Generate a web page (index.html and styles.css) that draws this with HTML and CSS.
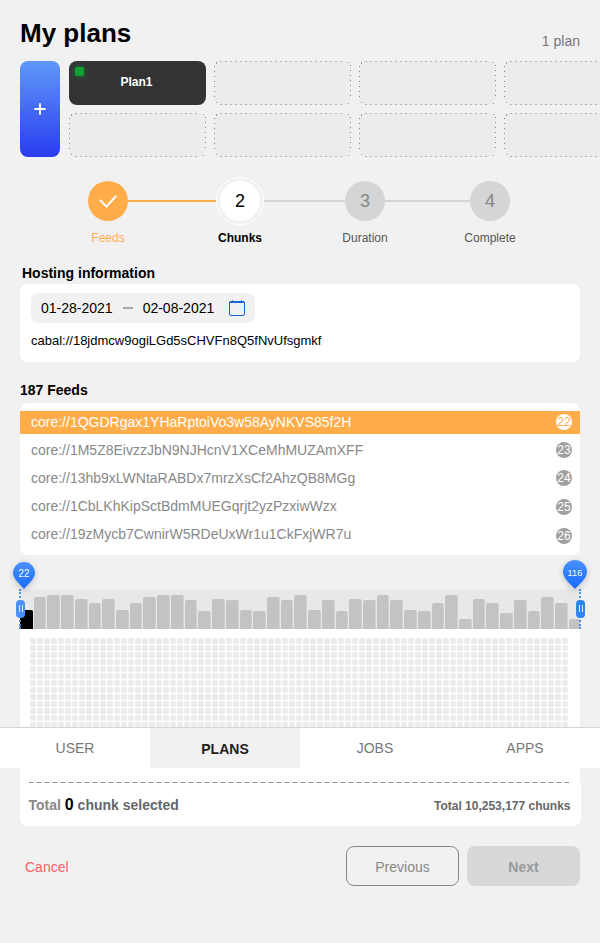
FILE: index.html
```html
<!DOCTYPE html>
<html lang="en">
<head>
<meta charset="utf-8">
<title>My plans</title>
<link rel="stylesheet" href="styles.css">
</head>
<body>
<svg class="defs" width="0" height="0">
  <symbol id="slot" viewBox="0 0 137 44">
    <rect width="137" height="44" rx="8" fill="#ececec"/>
    <path d="M6 .5H131M6 43.5H131" stroke="#b3b3b3" stroke-dasharray="2 3"/>
    <path d="M.5 5V40M136.500 4V39" stroke="#888" stroke-dasharray="1 4"/>
    <path d="M2 1h1v2h-1zM134 1h1v1h-1zM2 41h1v1h-1zM134 42h1v1h-1z" fill="#999"/>
  </symbol>
</svg>
<main class="page">
  <header class="head"><h1>My plans</h1><span class="count">1 plan</span></header>
  <section class="plans">
    <button class="add" aria-label="Add plan"><svg width="12" height="12" viewBox="0 0 12 12"><path d="M6 1v10M1 6h10" stroke="#fff" stroke-width="1.800" stroke-linecap="round"/></svg></button>
    <div class="slots">
      <div class="plan"><i class="status"></i>Plan1</div>
      <svg class="slot"><use href="#slot"/></svg>
      <svg class="slot"><use href="#slot"/></svg>
      <svg class="slot"><use href="#slot"/></svg>
      <svg class="slot"><use href="#slot"/></svg>
      <svg class="slot"><use href="#slot"/></svg>
      <svg class="slot"><use href="#slot"/></svg>
      <svg class="slot"><use href="#slot"/></svg>
    </div>
  </section>

  <section class="steps">
    <div class="step done"><div class="circle"><svg width="18" height="14" viewBox="0 0 18 14"><path d="M1.500 5.500L7.500 11.500L16.500 1.500" fill="none" stroke="#fff" stroke-width="2" stroke-linecap="round"/></svg></div><span class="label">Feeds</span></div>
    <div class="line line-done"></div>
    <div class="step active"><div class="ring"><div class="circle">2</div></div><span class="label">Chunks</span></div>
    <div class="line line-two"></div>
    <div class="step"><div class="circle">3</div><span class="label">Duration</span></div>
    <div class="line line-three"></div>
    <div class="step"><div class="circle">4</div><span class="label">Complete</span></div>
  </section>

  <h2 class="hosting-title">Hosting information</h2>
  <section class="hosting">
    <div class="dates"><span>01-28-2021</span><i class="dash"></i><span>02-08-2021</span>
      <svg class="calendar" width="16" height="16" viewBox="0 0 16 16"><rect x=".5" y="1.500" width="15" height="14" rx="1.500" fill="none" stroke="#1b62d6"/><path d="M.5 1.500h15v1.500h-15zM3 .3h1v1.500H3zM12 .3h1v1.500h-1z" fill="#1b62d6"/></svg>
    </div>
    <div class="link">cabal://18jdmcw9ogiLGd5sCHVFn8Q5fNvUfsgmkf</div>
  </section>

  <h2 class="feeds-title">187 Feeds</h2>
  <section class="feeds">
    <div class="feed selected"><span>core://1QGDRgax1YHaRptoiVo3w58AyNKVS85f2H</span><b>22</b></div>
    <div class="feed"><span>core://1M5Z8EivzzJbN9NJHcnV1XCeMhMUZAmXFF</span><b>23</b></div>
    <div class="feed"><span>core://13hb9xLWNtaRABDx7mrzXsCf2AhzQB8MGg</span><b>24</b></div>
    <div class="feed"><span>core://1CbLKhKipSctBdmMUEGqrjt2yzPzxiwWzx</span><b>25</b></div>
    <div class="feed"><span>core://19zMycb7CwnirW5RDeUxWr1u1CkFxjWR7u</span><b>26</b></div>
  </section>

  <section class="range">
    <div class="bars" id="bars"></div>
    <div class="rail rail-start"></div>
    <div class="rail rail-end"></div>
    <div class="handle handle-start"></div>
    <div class="handle handle-end"></div>
    <div class="pin pin-start">
      <svg width="22" height="27" viewBox="0 0 22 27"><defs><linearGradient id="blue" x1="0" y1="0" x2="0" y2="1"><stop offset="0" stop-color="#4a90fb"/><stop offset="1" stop-color="#176cff"/></linearGradient></defs><path d="M11 27C8 23 0 17 0 11A11 11 0 0 1 22 11C22 17 14 23 11 27Z" fill="url(#blue)"/></svg><span>22</span>
    </div>
    <div class="pin pin-end">
      <svg width="24" height="29" viewBox="0 0 24 29"><path d="M12 29C9 25 0 19 0 12A12 12 0 0 1 24 12C24 19 15 25 12 29Z" fill="url(#blue)"/></svg><span>116</span>
    </div>
  </section>
  <section class="chunks">
    <svg width="539" height="89"><defs><pattern id="cells" width="7" height="7" patternUnits="userSpaceOnUse"><rect width="6" height="6" rx="1.800" fill="#ececec"/></pattern></defs><rect width="539" height="89" fill="url(#cells)"/></svg>
  </section>
  <nav class="tabs"><a>USER</a><a class="current">PLANS</a><a>JOBS</a><a>APPS</a></nav>
  <div class="spacer"></div>
  <section class="totals">
    <svg class="divider" width="540" height="1"><path d="M-.5 .5H540" stroke="#8992a8" stroke-dasharray="5 3"/></svg>
    <div class="totals-row"><span class="picked"><span class="soft">Total</span> <strong>0</strong> chunk selected</span><span class="all">Total 10,253,177 chunks</span></div>
  </section>
  <footer class="actions"><a class="cancel">Cancel</a><button class="previous">Previous</button><button class="next">Next</button></footer>
</main>
<script src="bars.js"></script>
</body>
</html>
```
FILE: styles.css
```css
* { box-sizing: border-box; }
body { margin: 0; background: #f1f1f1; font-family: "Liberation Sans", Arial, sans-serif; color: #000; }
h1, h2 { margin: 0; }
button { font: inherit; padding: 0; border: 0; }
svg { display: block; }
.defs { position: absolute; }
.page { width: 600px; height: 943px; overflow: hidden; }
.head { height: 61px; padding: 17px 20px 0; display: flex; justify-content: space-between; }
.head h1 { font-size: 26px; line-height: 32px; }
.count { font-size: 14px; line-height: 16px; margin-top: 16px; color: #777; }
.plans { display: flex; gap: 9px; padding-left: 20px; height: 96px; }
.add { width: 40px; height: 96px; flex: none; border-radius: 8px; background: linear-gradient(#6098f8, #293cf0); display: flex; align-items: center; justify-content: center; }
.slots { display: grid; grid-template-columns: repeat(4, 137px); grid-template-rows: 44px 44px; gap: 8px; }
.slot { width: 137px; height: 44px; }
.plan { position: relative; border-radius: 8px; background: #333; color: #fff; font-weight: bold; font-size: 12px; line-height: 42px; text-align: center; padding-right: 2px; }
.status { position: absolute; left: 6px; top: 6px; width: 9px; height: 9px; border-radius: 2px; background: #13a136; box-shadow: 0 0 7px rgba(19, 161, 54, .7); }
.steps { display: flex; padding: 20px 0 0 88px; height: 107px; }
.step { width: 40px; display: flex; flex-direction: column; align-items: center; padding-top: 4px; }
.circle { width: 40px; height: 40px; flex: none; border-radius: 50%; background: #d5d5d5; color: #888; font-size: 18px; display: flex; align-items: center; justify-content: center; }
.done .circle { background: #ffad4a; padding-top: 2px; }
.active { width: 48px; padding-top: 0; }
.ring { width: 48px; height: 48px; padding: 3px; border: 1px solid #fff; border-radius: 50%; }
.active .circle { background: #fff; color: #000; }
.label { font-size: 12px; line-height: 14px; margin-top: 10px; color: #555; white-space: nowrap; }
.active .label { margin-top: 6px; font-weight: bold; color: #000; }
.done .label { color: #ffad4a; }
.line { height: 2px; margin-top: 23px; background: #d5d5d5; }
.line-done { width: 88px; background: #ffad4a; }
.line-two { width: 81px; }
.line-three { width: 85px; }
.hosting-title { font-size: 14px; line-height: 18px; height: 20px; padding-left: 22px; }
.hosting { margin: 0 20px; height: 78px; background: #fff; border-radius: 8px; padding: 9px 11px; }
.dates { width: 224px; height: 30px; border-radius: 8px; background: #f1f1f1; padding: 0 10px; display: flex; align-items: center; font-size: 14px; }
.dash { width: 10px; height: 2px; background: #aaa; margin: 0 10px; }
.calendar { margin-left: auto; }
.link { font-size: 13px; line-height: 16px; margin-top: 10px; }
.feeds-title { font-size: 14px; line-height: 16px; margin: 20px 0 5px 20px; }
.feeds { margin: 0 20px; height: 152px; padding-top: 8px; border-radius: 8px; background: #fff; display: flex; flex-direction: column; gap: 5px; }
.feed { height: 23px; padding: 0 8px 0 11px; display: flex; justify-content: space-between; align-items: flex-start; font-size: 14px; line-height: 22px; color: #888; }
.feed b { width: 16px; height: 16px; margin-top: 3px; border-radius: 50%; background: #a0a0a0; color: #fff; font-size: 12px; font-weight: normal; line-height: 16px; display: flex; justify-content: center; }
.feed:nth-child(4) b { margin-top: 4px; }
.feed:nth-child(5) b { margin-top: 5px; }
.feed.selected { background: #ffad4a; color: #fff; }
.feed.selected b { background: #fff; color: #ffad4a; }
.range { position: relative; margin: 34px 20px 0; height: 40px; background: #e7e8ea; }
.bars { height: 40px; display: flex; align-items: flex-end; gap: 1px; overflow: hidden; }
.bar { flex: none; width: 12.72px; border-radius: 2px 2px 0 0; background: #c3c3c3; border-right: 1px solid #d0d0d0; }
.bar:first-child { background: #000; border-color: #000; }
.rail { position: absolute; top: 0; height: 40px; border-left: 2px dotted #4a90e2; }
.rail-start { left: -1px; }
.rail-end { left: 559px; }
.handle { position: absolute; top: 11px; width: 9px; height: 18px; border-radius: 4px; background: #4a90f8; display: flex; justify-content: center; padding-top: 5px; }
.handle::before { content: ""; box-sizing: border-box; width: 4px; height: 7px; border: solid #dce9ff; border-width: 0 1px; }
.handle-start { left: -4px; }
.handle-end { left: 556px; background: #2b87f5; }
.pin { position: absolute; color: #fff; font-size: 10px; text-align: center; filter: drop-shadow(0 2px 3px rgba(0, 0, 0, .2)); }
.pin span { position: absolute; inset: 6px 0 auto; line-height: 11px; }
.pin-start { left: -7px; top: -27px; }
.pin-end { left: 543px; top: -29px; }
.pin-end span { top: 7px; font-size: 9.5px; }
.chunks { margin: 0 20px; height: 98px; background: #fff; padding: 9px 0 0 10px; overflow: hidden; }
.tabs { height: 41px; display: grid; grid-template-columns: repeat(4, 1fr); background: #fff; border-top: 1px solid #d5d5d5; }
.tabs a { font-size: 14px; line-height: 40px; text-align: center; color: #777; }
.tabs .current { background: #f1f1f1; color: #222; font-weight: bold; line-height: 42px; height: 40px; }
.spacer { margin: 0 20px; height: 14px; background: #fff; }
.totals { margin: 0 19px 0 20px; height: 44px; background: #fff; border-radius: 0 0 8px 8px; padding: 0 10.5px 0 8.5px; }
.totals-row { display: flex; justify-content: space-between; font-weight: bold; color: #666; line-height: 20px; padding-top: 12px; }
.picked { font-size: 14px; }
.picked .soft { color: #888; }
.picked strong { font-size: 16px; line-height: 16px; color: #000; }
.all { font-size: 12px; padding-top: 1px; }
.actions { display: flex; padding: 20px 20px 0 25px; font-size: 14px; line-height: 42px; }
.cancel { color: #ff5f5f; flex: 1; }
.previous, .next { width: 113px; height: 40px; border-radius: 8px; line-height: 16px; padding-top: 2px; }
.previous { border: 1px solid #888; background: transparent; color: #888; }
.next { margin-left: 8px; background: #d8d8d8; color: #999; font-weight: bold; }
```
FILE: bars.js
```js
const heights = [19, 32, 34, 34, 30, 26, 30, 19, 26, 32, 34, 34, 29, 18, 30, 29, 19, 18, 32, 29, 34,
  19, 29, 18, 30, 29, 34, 29, 19, 18, 26, 34, 10, 30, 26, 16, 29, 18, 32, 26, 10];
const bars = document.getElementById("bars");
for (const height of heights) {
  const bar = document.createElement("div");
  bar.className = "bar";
  bar.style.height = height + "px";
  bars.appendChild(bar);
}
```
